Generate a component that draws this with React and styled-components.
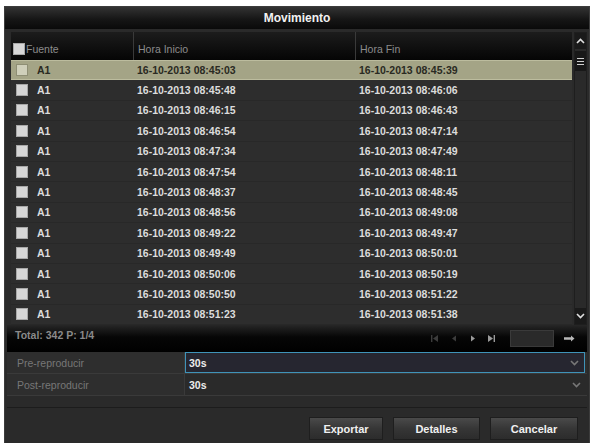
import styled, { createGlobalStyle } from 'styled-components';

const GlobalStyle = createGlobalStyle`
  html, body {
    margin: 0;
    padding: 0;
    background: #ffffff;
  }
  body {
    font-family: "Liberation Sans", Arial, sans-serif;
  }
`;

const Page = styled.div`
  padding: 6px 2px 0 4px;
  height: 443px;
  box-sizing: border-box;
  overflow: hidden;
`;

const Window = styled.div`
  width: 586px;
  height: 437px;
  box-sizing: border-box;
  background: #2a2a2a;
  border: 1px solid #3c3c3c;
  border-bottom: none;
  display: flex;
  flex-direction: column;
`;

const TitleBar = styled.div`
  height: 22px;
  display: flex;
  align-items: center;
  justify-content: center;
  background: linear-gradient(#333, #161616 55%, #0a0a0a);
  color: #f2f2f2;
  font-size: 12px;
  font-weight: bold;
`;

const Body = styled.div`
  flex: 1;
  display: flex;
  flex-direction: column;
  padding: 3px 2px 0 2px;
`;

const ListArea = styled.div`
  display: grid;
  grid-template-columns: 1fr 13px;
  column-gap: 2px;
  padding-left: 4px;
`;

const Table = styled.div`
  display: grid;
  grid-template-columns: 122px 222px 1fr;
  grid-template-rows: 28px;
  grid-auto-rows: 20.4px;
`;

const HeadCell = styled.div`
  display: flex;
  align-items: center;
  gap: 1px;
  padding: 6px 0 0 ${(p) => (p.$first ? 2 : 4)}px;
  background: linear-gradient(#1c1c1c, #050505);
  border-left: ${(p) => (p.$first ? 'none' : '1px solid #3a3a3a')};
  color: #8c8c8c;
  font-size: 10.5px;
`;

const Cell = styled.div`
  display: flex;
  align-items: center;
  gap: 9px;
  padding-left: ${(p) => (p.$first ? 5 : 4)}px;
  background: ${(p) => (p.$active ? '#a4a486' : '#2d2d2d')};
  border-bottom: 1px solid ${(p) => (p.$active ? '#bcbc9e' : '#282828')};
  border-top: ${(p) => (p.$active ? '1px solid #bcbc9e' : 'none')};
  color: ${(p) => (p.$active ? '#2a2a22' : '#dcdcdc')};
  font-size: 10.5px;
  font-weight: bold;
  box-sizing: border-box;
`;

const Check = styled.span`
  width: 10px;
  height: 10px;
  flex: none;
  background: ${(p) => (p.$active ? '#cfcfba' : '#d6d6d6')};
  border: 1px solid ${(p) => (p.$active ? '#8e8e74' : '#a8a8a8')};
`;

const ScrollBar = styled.div`
  display: flex;
  flex-direction: column;
  align-items: center;
  background: #2a2a2a;
  border: 1px solid #1e1e1e;
`;

const ScrollButton = styled.div`
  width: 100%;
  height: 16px;
  display: flex;
  align-items: center;
  justify-content: center;
  background: #1a1a1a;
  margin-top: ${(p) => (p.$bottom ? 'auto' : '0')};
`;

const Thumb = styled.div`
  width: 100%;
  height: 20px;
  margin-top: 2px;
  display: flex;
  align-items: center;
  justify-content: center;
  background: #181818;
`;

const FooterBar = styled.div`
  height: 27px;
  display: flex;
  align-items: flex-start;
  padding: 4px 12px 0 8px;
  box-sizing: border-box;
  background: linear-gradient(#262626, #060606 45%, #000);
  color: #8a8a8a;
  font-size: 10.5px;
  font-weight: bold;
`;

const Pager = styled.div`
  margin-left: auto;
  display: flex;
  align-items: center;
  gap: 10px;
  padding-top: 1px;
`;

const PageInput = styled.div`
  width: 42px;
  height: 15px;
  margin-left: 4px;
  background: #2a2a2a;
  border: 1px solid #3a3a3a;
`;

const SettingRow = styled.div`
  display: grid;
  grid-template-columns: 178px 1fr;
  height: 21px;
  border-bottom: 1px solid #3a3a3a;
  background: #2e2e2e;
`;

const SettingLabel = styled.div`
  display: flex;
  align-items: center;
  padding-left: 10px;
  color: #777;
  font-size: 10.5px;
  border-right: 1px solid #3a3a3a;
`;

const SettingValue = styled.div`
  display: flex;
  align-items: center;
  justify-content: space-between;
  padding: 0 6px 0 4px;
  color: #ececec;
  font-size: 10.5px;
  font-weight: bold;
  background: ${(p) => (p.$focused ? '#262630' : '#2a2a2a')};
  outline: ${(p) => (p.$focused ? '1px solid #3f93b8' : 'none')};
  outline-offset: -1px;
  margin-right: ${(p) => (p.$focused ? '2px' : '0')};
`;

const ButtonBar = styled.div`
  margin-top: 11px;
  border-top: 1px solid #1c1c1c;
  display: flex;
  justify-content: flex-end;
  gap: 10px;
  padding: 9px 9px 0 0;
`;

const Button = styled.div`
  width: ${(p) => p.$w}px;
  height: 21px;
  display: flex;
  align-items: center;
  justify-content: center;
  background: linear-gradient(#4a4a4a, #363636 50%, #2c2c2c);
  border: 1px solid #1e1e1e;
  color: #f0f0f0;
  font-size: 11px;
  font-weight: bold;
`;

const Chevron = ({ up, color = '#e0e0e0' }) => (
  <svg width="9" height="6" viewBox="0 0 9 6">
    <path
      d={up ? 'M1 5 L4.5 1.5 L8 5' : 'M1 1 L4.5 4.5 L8 1'}
      fill="none"
      stroke={color}
      strokeWidth="1.6"
    />
  </svg>
);

const Grip = () => (
  <svg width="9" height="9" viewBox="0 0 9 9">
    <path d="M1 1.5 H8 M1 4.5 H8 M1 7.5 H8" stroke="#d0d0d0" strokeWidth="1.2" />
  </svg>
);

const PagerIcon = ({ kind, dim }) => {
  const c = dim ? '#3c3c3c' : '#9a9a9a';
  const shapes = {
    first: (
      <>
        <rect x="1" y="1" width="1.4" height="7" fill={c} />
        <path d="M8 1 L3 4.5 L8 8 Z" fill={c} />
      </>
    ),
    prev: <path d="M7 1.5 L3 4.5 L7 7.5 Z" fill={c} />,
    next: <path d="M3 1.5 L7 4.5 L3 7.5 Z" fill={c} />,
    last: (
      <>
        <path d="M1 1 L6 4.5 L1 8 Z" fill={c} />
        <rect x="6.6" y="1" width="1.4" height="7" fill={c} />
      </>
    ),
  };
  return (
    <svg width="9" height="9" viewBox="0 0 9 9">
      {shapes[kind]}
    </svg>
  );
};

const GoArrow = () => (
  <svg width="11" height="7" viewBox="0 0 11 7">
    <path d="M0 2.3 H7 V0.5 L10.5 3.5 L7 6.5 V4.7 H0 Z" fill="#b8b8b8" />
  </svg>
);

const records = [
  ['08:45:03', '08:45:39'],
  ['08:45:48', '08:46:06'],
  ['08:46:15', '08:46:43'],
  ['08:46:54', '08:47:14'],
  ['08:47:34', '08:47:49'],
  ['08:47:54', '08:48:11'],
  ['08:48:37', '08:48:45'],
  ['08:48:56', '08:49:08'],
  ['08:49:22', '08:49:47'],
  ['08:49:49', '08:50:01'],
  ['08:50:06', '08:50:19'],
  ['08:50:50', '08:51:22'],
  ['08:51:23', '08:51:38'],
];

export default function App() {
  return (
    <>
      <GlobalStyle />
      <Page>
        <Window>
          <TitleBar>Movimiento</TitleBar>
          <Body>
            <ListArea>
              <Table>
                <HeadCell $first>
                  <Check />
                  Fuente
                </HeadCell>
                <HeadCell>Hora Inicio</HeadCell>
                <HeadCell>Hora Fin</HeadCell>
                {records.map(([start, end], i) => {
                  const active = i === 0;
                  return [
                    <Cell key={`s${i}`} $first $active={active}>
                      <Check $active={active} />
                      A1
                    </Cell>,
                    <Cell key={`a${i}`} $active={active}>
                      16-10-2013 {start}
                    </Cell>,
                    <Cell key={`b${i}`} $active={active}>
                      16-10-2013 {end}
                    </Cell>,
                  ];
                })}
              </Table>
              <ScrollBar>
                <ScrollButton>
                  <Chevron up />
                </ScrollButton>
                <Thumb>
                  <Grip />
                </Thumb>
                <ScrollButton $bottom>
                  <Chevron />
                </ScrollButton>
              </ScrollBar>
            </ListArea>

            <FooterBar>
              Total: 342 P: 1/4
              <Pager>
                <PagerIcon kind="first" dim />
                <PagerIcon kind="prev" dim />
                <PagerIcon kind="next" />
                <PagerIcon kind="last" />
                <PageInput />
                <GoArrow />
              </Pager>
            </FooterBar>

            <SettingRow>
              <SettingLabel>Pre-reproducir</SettingLabel>
              <SettingValue $focused>
                30s
                <Chevron color="#777" />
              </SettingValue>
            </SettingRow>
            <SettingRow>
              <SettingLabel>Post-reproducir</SettingLabel>
              <SettingValue>
                30s
                <Chevron color="#777" />
              </SettingValue>
            </SettingRow>

            <ButtonBar>
              <Button $w={72}>Exportar</Button>
              <Button $w={85}>Detalles</Button>
              <Button $w={86}>Cancelar</Button>
            </ButtonBar>
          </Body>
        </Window>
      </Page>
    </>
  );
}
